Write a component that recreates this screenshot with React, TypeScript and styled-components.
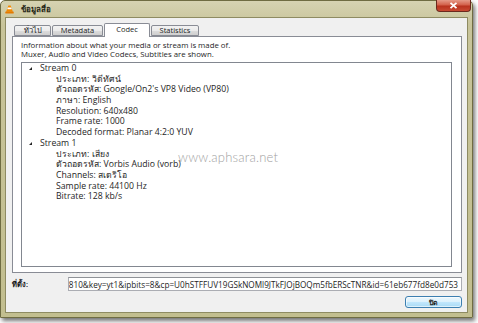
import React from "react";
import styled, { createGlobalStyle } from "styled-components";

const Global = createGlobalStyle`
  html, body { margin: 0; padding: 0; background: #ffffff; }
  body {
    width: 478px; height: 323px; overflow: hidden;
    font-family: "Open Sans", "Noto Sans", sans-serif;
    color: #1e1e1e;
  }
`;

const Window = styled.div`
  position: relative;
  width: 473px;
  height: 318px;
  box-sizing: border-box;
  display: flex;
  flex-direction: column;
  background: linear-gradient(#d6d3b2, #c8c49a 24px, #c2be8f);
  border: 1px solid #6f6c42;
  border-radius: 5px 5px 0 0;
  box-shadow: 2px 3px 4px rgba(0, 0, 0, 0.55);
`;

const TitleBar = styled.div`
  height: 16px;
  display: flex;
  align-items: center;
  padding-left: 4px;
  gap: 7px;
`;

const Title = styled.span`
  font-size: 8px;
  font-weight: 600;
  color: #262616;
  line-height: 1;
`;

const CloseBtn = styled.div`
  margin-left: auto;
  margin-right: 1px;
  align-self: flex-start;
  margin-top: -1px;
  width: 35px;
  height: 12px;
  box-sizing: border-box;
  border: 1px solid #6b2a1e;
  border-top: none;
  border-radius: 0 0 4px 4px;
  background: linear-gradient(#e59a88, #d3604a 45%, #b8321e 55%, #c84a32);
  display: flex;
  align-items: center;
  justify-content: center;
`;

const Client = styled.div`
  flex: 1;
  margin: 0 4px 4px 4px;
  background: #f0f0f0;
  border: 1px solid #8e8b62;
  display: flex;
  flex-direction: column;
  padding: 5px 5px 4px 6px;
`;

const TabStrip = styled.div`
  height: 13px;
  display: flex;
  align-items: flex-end;
  padding-left: 2px;
  position: relative;
  z-index: 1;
`;

const Tab = styled.div<{ $w: number; $active?: boolean }>`
  width: ${(p) => p.$w}px;
  height: ${(p) => (p.$active ? 14 : 11)}px;
  box-sizing: border-box;
  margin-bottom: ${(p) => (p.$active ? -1 : 0)}px;
  margin-right: 1px;
  border: 1px solid #898c95;
  border-bottom: ${(p) => (p.$active ? "none" : "1px solid #898c95")};
  border-radius: 2px 2px 0 0;
  background: ${(p) =>
    p.$active ? "#ffffff" : "linear-gradient(#f2f2f2, #ebebeb 50%, #dddddd 51%, #cfcfcf)"};
  font-size: 7.5px;
  line-height: 1;
  display: flex;
  align-items: center;
  justify-content: center;
  padding-bottom: ${(p) => (p.$active ? 2 : 0)}px;
`;

const Panel = styled.div`
  flex: 1;
  background: #ffffff;
  border: 1px solid #898c95;
  display: flex;
  flex-direction: column;
  min-height: 0;
`;

const Description = styled.div`
  padding: 4px 0 0 8px;
  font-size: 7.8px;
  line-height: 9px;
  height: 18px;
`;

const TreeBox = styled.div`
  position: relative;
  flex: 1;
  margin: 3px 9px 5px 8px;
  border: 1px solid #828790;
  overflow: hidden;
`;

const Row = styled.div<{ $indent: number }>`
  height: 10.7px;
  line-height: 10.7px;
  font-size: 8.7px;
  white-space: nowrap;
  display: flex;
  align-items: center;
  padding-left: ${(p) => p.$indent}px;
`;

const Arrow = styled.span`
  width: 0;
  height: 0;
  border-left: 3px solid transparent;
  border-bottom: 3px solid #262626;
  margin-right: 8px;
`;

const Watermark = styled.div`
  position: absolute;
  left: 156px;
  top: 88px;
  font-family: "Lato", "DejaVu Sans", sans-serif;
  font-weight: 300;
  font-size: 13px;
  color: #a2a2a2;
  letter-spacing: 0.2px;
  line-height: 1;
`;

const LocationRow = styled.div`
  margin-top: 4px;
  height: 14px;
  display: flex;
  align-items: center;
`;

const Label = styled.span`
  width: 56px;
  font-size: 7.5px;
  font-weight: 600;
`;

const Field = styled.div`
  flex: 1;
  height: 14px;
  box-sizing: border-box;
  border: 1px solid #abadb3;
  border-top-color: #8e9196;
  background: #fff;
  overflow: hidden;
  display: flex;
  justify-content: flex-end;
  align-items: center;
  white-space: nowrap;
  font-size: 8.2px;
  padding-right: 3px;
`;

const ButtonRow = styled.div`
  margin-top: 5px;
  display: flex;
  justify-content: flex-end;
`;

const Button = styled.div`
  width: 57px;
  height: 12px;
  box-sizing: border-box;
  border: 1px solid #3c7fb1;
  border-radius: 3px;
  background: linear-gradient(#ecf7fd, #dcf1fc 48%, #c1e6fc 52%, #a9daf5);
  box-shadow: inset 0 0 0 1px rgba(255, 255, 255, 0.6);
  font-size: 7px;
  font-weight: 600;
  display: flex;
  align-items: center;
  justify-content: center;
  line-height: 1;
`;

const VlcIcon = () => (
  <svg width="9" height="9" viewBox="0 0 16 16">
    <path d="M6 1h4l4 11H2z" fill="#f28a00" />
    <path d="M5 4.5h6l1 3H4z" fill="#ffffff" />
    <rect x="0.5" y="11.5" width="15" height="3.5" rx="1" fill="#e47a00" />
  </svg>
);

const CloseX = () => (
  <svg width="9" height="7" viewBox="0 0 9 7">
    <path d="M1.5 0.8l6 5.4M7.5 0.8l-6 5.4" stroke="#fff" strokeWidth="1.8" />
  </svg>
);

const streams = [
  {
    name: "Stream 0",
    items: [
      "ประเภท: วิดีทัศน์",
      "ตัวถอดรหัส: Google/On2's VP8 Video (VP80)",
      "ภาษา: English",
      "Resolution: 640x480",
      "Frame rate: 1000",
      "Decoded format: Planar 4:2:0 YUV",
    ],
  },
  {
    name: "Stream 1",
    items: [
      "ประเภท: เสียง",
      "ตัวถอดรหัส: Vorbis Audio (vorb)",
      "Channels: สเตริโอ",
      "Sample rate: 44100 Hz",
      "Bitrate: 128 kb/s",
    ],
  },
];

export default function App() {
  return (
    <>
      <Global />
      <Window>
        <TitleBar>
          <VlcIcon />
          <Title>ข้อมูลสื่อ</Title>
          <CloseBtn>
            <CloseX />
          </CloseBtn>
        </TitleBar>
        <Client>
          <TabStrip>
            <Tab $w={37}>ทั่วไป</Tab>
            <Tab $w={51}>Metadata</Tab>
            <Tab $w={46} $active>
              Codec
            </Tab>
            <Tab $w={48}>Statistics</Tab>
          </TabStrip>
          <Panel>
            <Description>
              Information about what your media or stream is made of.
              <br />
              Muxer, Audio and Video Codecs, Subtitles are shown.
            </Description>
            <TreeBox>
              {streams.map((s) => (
                <React.Fragment key={s.name}>
                  <Row $indent={7}>
                    <Arrow />
                    {s.name}
                  </Row>
                  {s.items.map((it) => (
                    <Row key={it} $indent={34}>
                      {it}
                    </Row>
                  ))}
                </React.Fragment>
              ))}
              <Watermark>www.aphsara.net</Watermark>
            </TreeBox>
          </Panel>
          <LocationRow>
            <Label>ที่ตั้ง:</Label>
            <Field>
              810&amp;key=yt1&amp;ipbits=8&amp;cp=U0hSTFFUV19GSkNOMl9JTkFJOjBOQm5fbERScTNR&amp;id=61eb677fd8e0d753
            </Field>
          </LocationRow>
          <ButtonRow>
            <Button>ปิด</Button>
          </ButtonRow>
        </Client>
      </Window>
    </>
  );
}
